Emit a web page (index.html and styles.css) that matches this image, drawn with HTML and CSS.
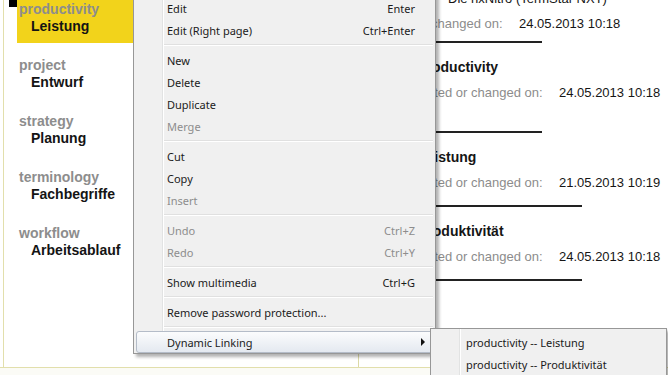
FILE: index.html
```html
<!DOCTYPE html>
<html lang="en">
<head>
  <meta charset="UTF-8">
  <title>Dynamic Linking</title>
  <link rel="stylesheet" href="styles.css">
</head>
<body>
  <div class="page">
    <!-- Liste der Einträge -->
    <div class="pane-left">
      <ul class="entry-list">
        <li class="entry entry-active"><span class="entry-label">productivity</span><span class="entry-value">Leistung</span></li>
        <li class="entry"><span class="entry-label">project</span><span class="entry-value">Entwurf</span></li>
        <li class="entry"><span class="entry-label">strategy</span><span class="entry-value">Planung</span></li>
        <li class="entry"><span class="entry-label">terminology</span><span class="entry-value">Fachbegriffe</span></li>
        <li class="entry"><span class="entry-label">workflow</span><span class="entry-value">Arbeitsablauf</span></li>
      </ul>
    </div>

    <!-- Detailansicht -->
    <div class="pane-right">
      <div class="term-list">
        <div class="term-block term-head">
          <div class="term-title">Die nxNitro (TermStar NXT)</div>
          <div class="term-meta"><span class="meta-label">Created or changed on:</span><span class="meta-date">24.05.2013 10:18</span></div>
        </div>
        <div class="term-block term-short">
          <div class="term-title">productivity</div>
          <div class="term-meta"><span class="meta-label">Created or changed on:</span><span class="meta-date">24.05.2013 10:18</span></div>
          <div class="term-note"></div>
        </div>
        <div class="term-block">
          <div class="term-title">Leistung</div>
          <div class="term-meta"><span class="meta-label">Created or changed on:</span><span class="meta-date">21.05.2013 10:19</span></div>
        </div>
        <div class="term-block">
          <div class="term-title">Produktivität</div>
          <div class="term-meta"><span class="meta-label">Created or changed on:</span><span class="meta-date">24.05.2013 10:18</span></div>
        </div>
      </div>
    </div>
  </div>

  <span class="marker"></span>

  <!-- Kontextmenü -->
  <div class="menu context-menu">
    <div class="menu-item"><span>Edit</span><span>Enter</span></div>
    <div class="menu-item"><span>Edit (Right page)</span><span>Ctrl+Enter</span></div>
    <div class="menu-sep"></div>
    <div class="menu-item"><span>New</span></div>
    <div class="menu-item"><span>Delete</span></div>
    <div class="menu-item"><span>Duplicate</span></div>
    <div class="menu-item disabled"><span>Merge</span></div>
    <div class="menu-sep"></div>
    <div class="menu-item"><span>Cut</span></div>
    <div class="menu-item"><span>Copy</span></div>
    <div class="menu-item disabled"><span>Insert</span></div>
    <div class="menu-sep"></div>
    <div class="menu-item disabled"><span>Undo</span><span>Ctrl+Z</span></div>
    <div class="menu-item disabled"><span>Redo</span><span>Ctrl+Y</span></div>
    <div class="menu-sep"></div>
    <div class="menu-item"><span>Show multimedia</span><span>Ctrl+G</span></div>
    <div class="menu-sep"></div>
    <div class="menu-item"><span>Remove password protection...</span></div>
    <div class="menu-sep"></div>
    <div class="menu-item has-sub is-open"><span>Dynamic Linking</span><span class="menu-arrow"></span></div>
  </div>

  <div class="menu sub-menu">
    <div class="menu-item"><span>productivity -- Leistung</span></div>
    <div class="menu-item"><span>productivity -- Produktivität</span></div>
  </div>
</body>
</html>
```

FILE: styles.css
```css
body {
  margin: 0;
  background: #fbfbf6;
  font-family: "Liberation Sans", Arial, sans-serif;
  overflow: hidden;
}

.page {
  display: flex;
  height: 367px;
  border-bottom: 1px solid #e2dfac;
  background: #fff;
  overflow: hidden;
}

/* linke Spalte */
.pane-left {
  box-sizing: border-box;
  width: 356px;
  margin-left: 3px;
  padding-left: 13px;
  border-left: 1px solid #e2dfac;
  border-right: 1px solid #dcd9a6;
  background: #fff;
}

.entry-list {
  list-style: none;
  margin: -9px 0 0;
  padding: 0;
}

.entry {
  padding: 10px 0 8px 2px;
  margin-bottom: 4px;
  font-size: 14px;
  font-weight: bold;
}

.entry-active {
  background-color: #f2d31b;
}

.entry-label {
  display: block;
  line-height: 17px;
  color: #8d8d8d;
}

.entry-value {
  display: block;
  line-height: 17px;
  padding-left: 12px;
  color: #141414;
}

/* rechte Spalte */
.pane-right {
  flex: 1;
  padding-left: 7px;
  font-size: 13px;
}

.term-list {
  margin-top: -14px;
}

.term-block {
  width: 176px;
  margin-left: 40px;
  padding: 12px 0 10px;
  border-bottom: 2px solid #222;
  white-space: nowrap;
}

.term-head {
  margin-left: 0;
  padding: 0 0 5px;
}

.term-short {
  width: 136px;
}

.term-title {
  line-height: 25px;
  padding-left: 12px;
  font-size: 14px;
  font-weight: bold;
  color: #151515;
}

.term-head .term-title {
  padding-left: 82px;
  font-size: 13px;
  font-weight: normal;
}

.term-meta {
  display: flex;
  line-height: 25px;
}

.meta-label {
  flex-shrink: 0;
  width: 153px;
  color: #8c8c8c;
}

.meta-date {
  color: #161616;
}

.term-note {
  height: 16px;
}

.marker {
  position: absolute;
  left: 9px;
  top: 0;
  width: 8px;
  height: 7px;
  background: #000;
}

/* Menüs */
.menu {
  position: absolute;
  box-sizing: border-box;
  padding: 2px 2px 0;
  border: 1px solid #979797;
  background-color: #f0f0f0;
  background-image: linear-gradient(to right, transparent 28px, #e2e3e3 28px, #e2e3e3 29px, #fff 29px, #fff 30px, transparent 30px);
  box-shadow: 3px 3px 3px rgba(0,0,0,0.3);
  font-family: "Segoe UI", "Noto Sans", sans-serif;
  font-size: 11px;
  color: #1b1b1b;
}

.context-menu {
  left: 133px;
  top: -6px;
  width: 303px;
}

.sub-menu {
  left: 430px;
  top: 328px;
  width: 237px;
  height: 60px;
}

.menu-item {
  display: flex;
  justify-content: space-between;
  align-items: center;
  height: 22px;
  padding: 0 18px 0 31px;
  white-space: nowrap;
}

.sub-menu .menu-item {
  padding-left: 33px;
}

.menu-item.disabled {
  color: #8d8d8d;
}

.menu-item.has-sub {
  padding-right: 8px;
}

.menu-item.is-open {
  box-sizing: border-box;
  padding-left: 30px;
  padding-right: 7px;
  border: 1px solid #b4bcc8;
  border-radius: 3px;
  background: linear-gradient(#fbfcfd, #e4e9f0);
}

.menu-arrow {
  width: 0;
  height: 0;
  border-left: 4px solid #111;
  border-top: 4px solid transparent;
  border-bottom: 4px solid transparent;
}

.menu-sep {
  height: 1px;
  margin: 3px 0 3px 28px;
  background: #e0e0e0;
  border-bottom: 1px solid #fff;
}
```
